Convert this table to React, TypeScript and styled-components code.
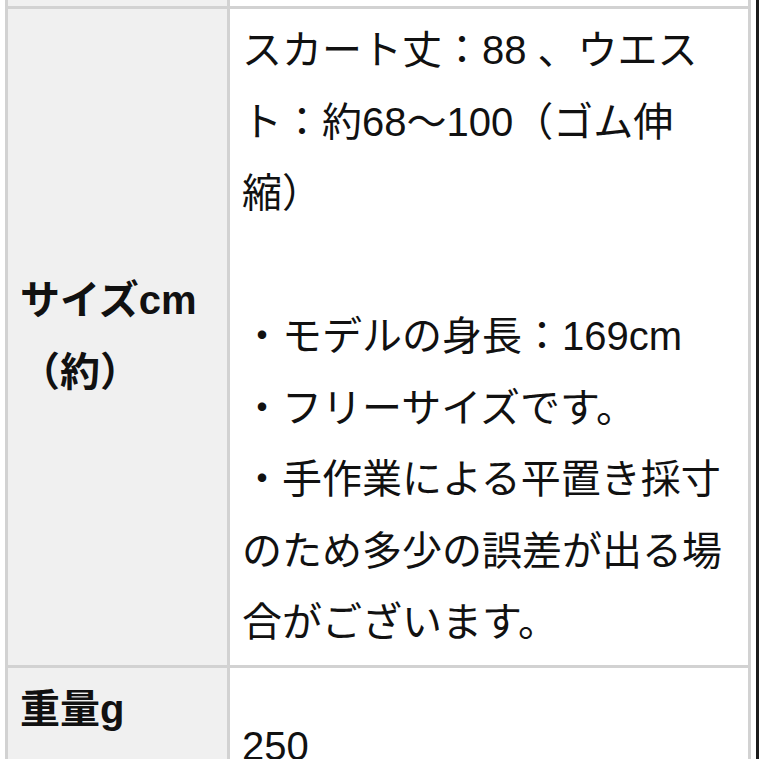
import styled, { createGlobalStyle } from "styled-components";

const GlobalStyle = createGlobalStyle`
  html, body {
    margin: 0;
    padding: 0;
    background: #ffffff;
  }
  body {
    font-family: "Liberation Sans", "Noto Sans CJK JP", sans-serif;
    color: #111111;
  }
`;

const StyledPage = styled.div`
  width: 759px;
  height: 759px;
  box-sizing: border-box;
  padding: 0 5px 0 5px;
  border-right: 3px solid #1c1c1c;
  overflow: hidden;
`;

const StyledTable = styled.table`
  width: 746px;
  border-collapse: collapse;
  table-layout: fixed;
  font-size: 40px;
  line-height: 71.5px;
`;

const StyledLabel = styled.th<{ $valign?: "top" | "middle" }>`
  background-color: #f0f0f0;
  border: 3px solid #d2d2d2;
  padding: 6px 12px;
  text-align: left;
  font-weight: 700;
  vertical-align: ${(p) => p.$valign || "middle"};
`;

const StyledValue = styled.td`
  background-color: #ffffff;
  border: 3px solid #d2d2d2;
  padding: 6px 12px;
  font-weight: 400;
  vertical-align: top;
  white-space: nowrap;
`;

const StyledSliver = styled.tr`
  height: 6px;
  th,
  td {
    border-top: none;
    padding: 0;
    height: 6px;
    line-height: 0;
  }
`;

const StyledParagraph = styled.p<{ $gap?: number }>`
  margin: ${(p) => p.$gap || 0}px 0 0 0;
`;

export default function App() {
  return (
    <>
      <GlobalStyle />
      <StyledPage>
        <StyledTable>
          <colgroup>
            <col style={{ width: 222 }} />
            <col />
          </colgroup>
          <tbody>
            <StyledSliver>
              <StyledLabel />
              <StyledValue />
            </StyledSliver>
            <tr>
              <StyledLabel>サイズcm<br />（約）</StyledLabel>
              <StyledValue>
                スカート丈：88 、ウエス
                <br />
                ト：約68～100（ゴム伸
                <br />
                縮）
                <br />
                <br />
                ・モデルの身長：169cm
                <br />
                ・フリーサイズです。
                <br />
                ・手作業による平置き採寸
                <br />
                のため多少の誤差が出る場
                <br />
                合がございます。
              </StyledValue>
            </tr>
            <tr>
              <StyledLabel $valign="top">重量g</StyledLabel>
              <StyledValue>
                <StyledParagraph $gap={37}>250</StyledParagraph>
              </StyledValue>
            </tr>
          </tbody>
        </StyledTable>
      </StyledPage>
    </>
  );
}
